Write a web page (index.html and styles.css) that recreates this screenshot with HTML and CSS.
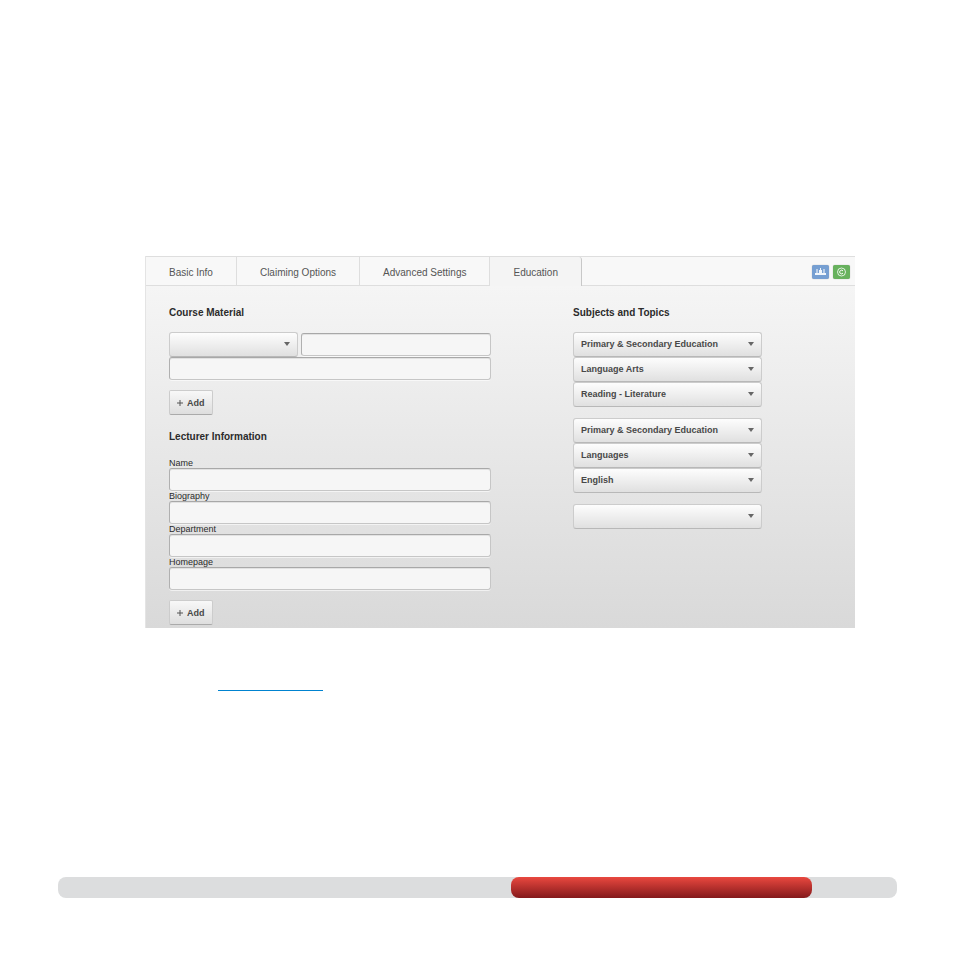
FILE: index.html
```html
<!DOCTYPE html>
<html lang="en">
<head>
    <meta charset="UTF-8">
    <meta name="viewport" content="width=device-width, initial-scale=1.0">
    <title>Education</title>
    <link rel="stylesheet" href="styles.css">
</head>
<body>
    <main class="panel">
        <nav class="tabs">
            <a class="tab" href="#basic">Basic Info</a>
            <a class="tab" href="#claiming">Claiming Options</a>
            <a class="tab" href="#advanced">Advanced Settings</a>
            <a class="tab active" href="#education">Education</a>
            <div class="badges">
                <button class="badge badge-blue" type="button" aria-label="Sharing">
                    <svg viewBox="0 0 17 14" width="17" height="14" fill="#fff">
                        <path d="M4 4h2v4H4zM11 4h2v4h-2z" opacity="0.5"/>
                        <path d="M8 3h1v2h1v3h4v2H3V8h4V5h1z" opacity="0.9"/>
                    </svg>
                </button>
                <button class="badge badge-green" type="button" aria-label="Copyright">
                    <svg viewBox="0 0 17 14" width="17" height="14" fill="none" stroke="#fff">
                        <circle cx="8.5" cy="7" r="4" opacity="0.8"/>
                        <path d="M10 6a1.8 1.8 0 1 0 0 2"/>
                    </svg>
                </button>
            </div>
        </nav>

        <form class="content">
            <div class="column">
                <h2>Course Material</h2>
                <div class="material-row">
                    <select class="dropdown" aria-label="Material type"><option></option></select>
                    <input class="field" type="text" aria-label="Material title">
                </div>
                <input class="field" type="text" aria-label="Material description">
                <button class="add" type="button">
                    <svg viewBox="0 0 6 7" width="6" height="7"><path d="M3 1v6M0 4h6" stroke="#555" fill="none"/></svg>
                    Add
                </button>

                <h2 class="lecturer">Lecturer Information</h2>
                <label for="name">Name</label>
                <input class="field" type="text" id="name">
                <label for="biography">Biography</label>
                <input class="field" type="text" id="biography">
                <label for="department">Department</label>
                <input class="field" type="text" id="department">
                <label for="homepage">Homepage</label>
                <input class="field" type="text" id="homepage">
                <button class="add" type="button">
                    <svg viewBox="0 0 6 7" width="6" height="7"><path d="M3 1v6M0 4h6" stroke="#555" fill="none"/></svg>
                    Add
                </button>
            </div>

            <div class="column">
                <h2>Subjects and Topics</h2>
                <div class="group">
                    <select class="dropdown" aria-label="Subject 1"><option>Primary &amp; Secondary Education</option></select>
                    <select class="dropdown" aria-label="Topic 1"><option>Language Arts</option></select>
                    <select class="dropdown" aria-label="Subtopic 1"><option>Reading - Literature</option></select>
                </div>
                <div class="group">
                    <select class="dropdown" aria-label="Subject 2"><option>Primary &amp; Secondary Education</option></select>
                    <select class="dropdown" aria-label="Topic 2"><option>Languages</option></select>
                    <select class="dropdown" aria-label="Subtopic 2"><option>English</option></select>
                </div>
                <div class="group">
                    <select class="dropdown" aria-label="Subject 3"><option></option></select>
                </div>
            </div>
        </form>
    </main>

    <div class="link-line"></div>

    <footer class="footer-bar">
        <div class="footer-section"></div>
    </footer>
</body>
</html>
```

FILE: styles.css
```css
* {
    box-sizing: border-box;
}
body {
    margin: 0;
    padding: 256px 57px 56px 58px;
    background-color: #fff;
    color: #2b2b2b;
    font-family: "Liberation Sans", Arial, sans-serif;
    font-size: 10px;
}
.panel {
    margin: 0 42px 0 87px;
    padding-bottom: 3px;
    border-left: 1px solid #e4e4e4;
    background-image: linear-gradient(#f5f5f5 30px, #d9d9d9);
}
.tabs {
    display: flex;
    height: 30px;
    border-top: 1px solid #dedede;
    background-color: #f8f8f8;
    box-shadow: inset 0 -1px #dedede;
}
.tab {
    padding: 0 23px;
    border-right: 1px solid #dedede;
    color: #555;
    line-height: 31px;
    text-decoration: none;
    white-space: nowrap;
}
.tab.active {
    border-right-color: #c8c8c8;
    border-top-right-radius: 3px;
    background-color: #f4f4f4;
}
.badges {
    display: flex;
    align-items: center;
    gap: 4px;
    margin-left: auto;
    padding-right: 5px;
}
.badge {
    display: block;
    width: 17px;
    height: 14px;
    padding: 0;
    border: none;
    border-radius: 2px;
    box-shadow: 0 0 1px rgba(0, 0, 0, 0.4);
}
.badge svg {
    display: block;
}
.badge-blue {
    background-color: #769fd2;
}
.badge-green {
    background-color: #67b15d;
}
.content {
    display: grid;
    grid-template-columns: 322fr 189fr;
    column-gap: 82px;
    padding: 19px 93px 0 23px;
}
.column {
    display: flex;
    flex-direction: column;
}
h2 {
    margin: 0 0 11px;
    font-size: 10px;
    line-height: 16px;
}
.material-row {
    display: grid;
    grid-template-columns: 129fr 190fr;
    align-items: center;
    gap: 3px;
}
.field {
    width: 100%;
    height: 23px;
    padding: 0 8px;
    border: 1px solid #c6c6c6;
    border-top-color: #a8a8a8;
    border-left-color: #b0b0b0;
    border-radius: 3px;
    background-color: #f6f6f6;
    box-shadow: inset 0 1px #e2e2e2, 0 1px rgba(255, 255, 255, 0.6);
    font: inherit;
}
label {
    font-size: 9px;
    line-height: 10px;
}
.dropdown {
    appearance: none;
    width: 100%;
    height: 25px;
    padding: 0 24px 1px 7px;
    border: 1px solid #ccc;
    border-bottom-color: #b8b8b8;
    border-radius: 3px;
    background: url("data:image/svg+xml,%3Csvg xmlns='http://www.w3.org/2000/svg' width='6' height='4'%3E%3Cpath d='M0 0h6L3 4z' fill='%23666'/%3E%3C/svg%3E") no-repeat right 7px top 9px, linear-gradient(#fdfdfd, #e0e0e0);
    color: #484848;
    font-family: inherit;
    font-size: 9px;
    font-weight: bold;
}
.add {
    display: flex;
    align-items: center;
    align-self: flex-start;
    gap: 4px;
    height: 25px;
    margin-top: 10px;
    padding: 0 7px;
    border: 1px solid #ccc;
    border-bottom-color: #aaa;
    border-radius: 2px;
    background-image: linear-gradient(#f8f8f8, #dedede);
    color: #484848;
    font-family: inherit;
    font-size: 9px;
    font-weight: bold;
}
.lecturer {
    margin-top: 14px;
    margin-bottom: 13px;
}
.group {
    margin-bottom: 11px;
}
.group .dropdown {
    display: block;
}
.link-line {
    width: 105px;
    height: 1px;
    margin: 62px 0 186px 160px;
    background-color: #0083d0;
}
.footer-bar {
    height: 21px;
    padding-left: 54%;
    border-radius: 8px;
    background-color: #dcddde;
}
.footer-section {
    width: 78%;
    height: 21px;
    border-radius: 8px;
    background-image: linear-gradient(#e9483f, #84191b);
}
```
